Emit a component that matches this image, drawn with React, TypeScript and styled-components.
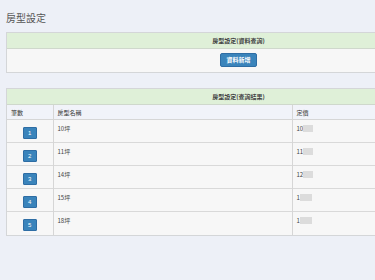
import React from "react";
import styled, { createGlobalStyle } from "styled-components";

const Global = createGlobalStyle`
  html, body { margin: 0; padding: 0; overflow: hidden; }
  body {
    background: #edf0f7;
    font-family: "Noto Sans CJK TC", "Noto Sans", "Liberation Sans", sans-serif;
    color: #333;
  }
`;

const Page = styled.div`
  padding: 11px 0 40px 6px;
  width: 465px;
`;

const Title = styled.h1`
  margin: 0 0 7px 0;
  font-size: 10px;
  line-height: 14px;
  font-weight: 400;
  color: #555;
`;

const Panel = styled.section<{ $gap?: number }>`
  width: 465px;
  box-sizing: border-box;
  border: 1px solid #d4d6d8;
  background: #f7f7f7;
  margin-bottom: ${(p) => p.$gap ?? 0}px;
`;

const Heading = styled.div`
  height: 15px;
  background: #dff0d8;
  border-bottom: 1px solid #cfd8cc;
  display: flex;
  align-items: center;
  justify-content: center;
  font-size: 6px;
  font-weight: 700;
  color: #444;
`;

const Body = styled.div`
  padding: 4px 0 5px;
  display: flex;
  justify-content: center;
`;

const PrimaryButton = styled.button`
  height: 14px;
  padding: 0 5px;
  border: 1px solid #2e6da4;
  border-radius: 2px;
  background: #3a84bb;
  color: #fff;
  font-family: inherit;
  font-size: 6px;
  font-weight: 700;
  line-height: 12px;
  cursor: pointer;
`;

const Table = styled.table`
  width: 100%;
  table-layout: fixed;
  border-collapse: collapse;
  font-size: 6px;
  color: #444;
`;

const Th = styled.th`
  height: 14px;
  padding: 0 4px;
  text-align: left;
  font-weight: 400;
  color: #333;
  background: #f1f3f9;
  border-bottom: 1px solid #d6d6d6;
  & + & { border-left: 1px solid #d6d6d6; }
`;

const Td = styled.td<{ $center?: boolean }>`
  height: 23px;
  box-sizing: border-box;
  padding: ${(p) => (p.$center ? "7px 0 0" : "5px 4px 0")};
  vertical-align: top;
  text-align: ${(p) => (p.$center ? "center" : "left")};
  line-height: 8px;
  color: #444;
  & + & { border-left: 1px solid #d6d6d6; }
`;

const Tr = styled.tr`
  & + & td { border-top: 1px solid #d9d9d9; }
`;

const NumButton = styled.button`
  width: 14px;
  height: 12px;
  padding: 0;
  border: 1px solid #2e6da4;
  border-radius: 1px;
  background: #3a84bb;
  color: #fff;
  font-family: "Liberation Sans", sans-serif;
  font-size: 6px;
  line-height: 10px;
  display: inline-block;
  vertical-align: top;
`;

const Masked = styled.span<{ $w: number }>`
  display: inline-block;
  width: ${(p) => p.$w}px;
  height: 7px;
  vertical-align: -1px;
  background: #dcdcdc;
  filter: blur(0.6px);
`;

const rows = [
  { n: 1, name: "10坪", price: "10", mask: 10 },
  { n: 2, name: "11坪", price: "11", mask: 10 },
  { n: 3, name: "14坪", price: "12", mask: 10 },
  { n: 4, name: "15坪", price: "1", mask: 12 },
  { n: 5, name: "18坪", price: "1", mask: 12 },
];

export default function App() {
  return (
    <>
      <Global />
      <Page>
        <Title>房型設定</Title>
        <Panel $gap={15}>
          <Heading>房型設定(資料查詢)</Heading>
          <Body>
            <PrimaryButton>資料新增</PrimaryButton>
          </Body>
        </Panel>
        <Panel>
          <Heading>房型設定(查詢結果)</Heading>
          <Table>
            <colgroup>
              <col style={{ width: 46 }} />
              <col style={{ width: 239 }} />
              <col />
            </colgroup>
            <thead>
              <tr>
                <Th>筆數</Th>
                <Th>房型名稱</Th>
                <Th>定價</Th>
              </tr>
            </thead>
            <tbody>
              {rows.map((r) => (
                <Tr key={r.n}>
                  <Td $center>
                    <NumButton>{r.n}</NumButton>
                  </Td>
                  <Td>{r.name}</Td>
                  <Td>
                    {r.price}
                    <Masked $w={r.mask} />
                  </Td>
                </Tr>
              ))}
            </tbody>
          </Table>
        </Panel>
      </Page>
    </>
  );
}
